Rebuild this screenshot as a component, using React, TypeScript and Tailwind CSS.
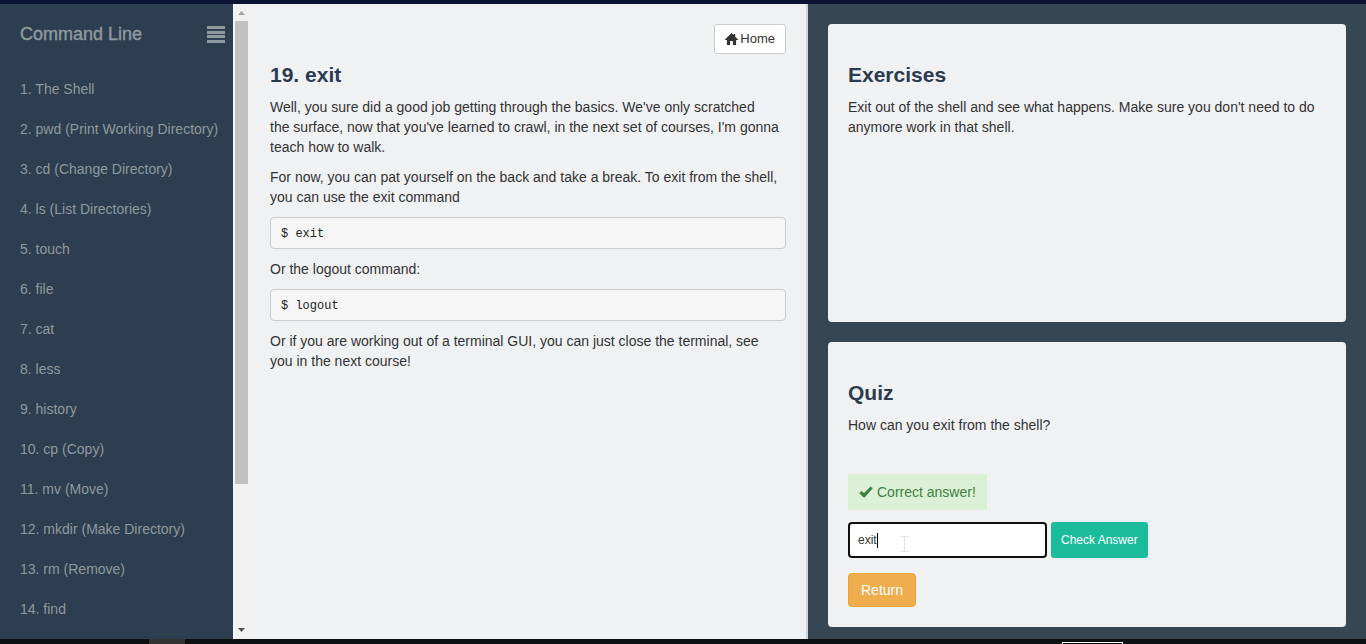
import { useState } from "react";

const lessons = [
  "The Shell",
  "pwd (Print Working Directory)",
  "cd (Change Directory)",
  "ls (List Directories)",
  "touch",
  "file",
  "cat",
  "less",
  "history",
  "cp (Copy)",
  "mv (Move)",
  "mkdir (Make Directory)",
  "rm (Remove)",
  "find",
];

function HomeIcon() {
  return (
    <svg viewBox="0 0 13 12" className="h-3 w-[13px]" fill="currentColor" aria-hidden="true">
      <path d="M6.5 0 8.6 2.1V1h1.6v2.7L13 6.5v.4h-1.9V12H7.9V8H5.1v4H1.9V6.9H0v-.4z" />
    </svg>
  );
}

function CheckIcon() {
  return (
    <svg viewBox="0 0 14 12" className="h-3 w-3.5" fill="currentColor" aria-hidden="true">
      <path d="M11.6.4 13.8 2.3 5.6 11.4H4.7L.3 7.3 2.4 5l2.6 2z" />
    </svg>
  );
}

function Sidebar() {
  return (
    <nav className="w-[233px] shrink-0 overflow-hidden bg-[#2d3e50] text-[#8f9a9f]">
      <div className="flex items-center justify-between pt-5 pr-2 pl-5">
        <h1 className="text-lg leading-5 font-normal [-webkit-text-stroke:0.4px]">Command Line</h1>
        <button type="button" aria-label="Toggle menu">
          <svg viewBox="0 0 18 18" className="h-[18px] w-[18px]" fill="currentColor" aria-hidden="true">
            <path d="M0 1h18v3H0zM0 6h18v3H0zM0 10h18v3H0zM0 15h18v3H0z" />
          </svg>
        </button>
      </div>
      <ol className="pt-[25px] pl-5">
        {lessons.map((name, i) => (
          <li key={name} className="h-10 whitespace-nowrap">
            <a href={`#lesson-${i + 1}`} className="block leading-10">
              {i + 1}. {name}
            </a>
          </li>
        ))}
      </ol>
    </nav>
  );
}

function ScrollTrack() {
  return (
    <div className="flex w-[15px] shrink-0 flex-col items-center border-l-2 border-[#f4f6fa] bg-[#f1f1f1]" aria-hidden="true">
      <svg viewBox="0 0 13 17" className="h-[17px] w-[13px] shrink-0">
        <path d="M3 11 6.5 7 10 11z" fill="#a3a3a3" />
      </svg>
      <div className="w-full grow-[463] bg-[#c1c1c1]" />
      <div className="w-full grow-[138]" />
      <svg viewBox="0 0 13 17" className="h-[17px] w-[13px] shrink-0">
        <path d="M3 6h7L6.5 10z" fill="#505050" />
      </svg>
    </div>
  );
}

function Heading({ children }: { children: string }) {
  return <h2 className="mb-[11px] text-[21px] leading-[22px] font-bold text-[#2c3a50]">{children}</h2>;
}

function Code({ children }: { children: string }) {
  return (
    <pre className="mb-2.5 rounded border border-[#cccccc] bg-[#f5f5f5] px-2.5 pt-1.5 pb-1 font-['Liberation_Mono',monospace] text-xs leading-5 text-[#222222]">
      {children}
    </pre>
  );
}

function Lesson() {
  return (
    <main className="min-w-0 overflow-hidden border-r-2 border-[#ccd4dc] bg-[#f0f1f3] pt-5 pr-5 pl-[22px]">
      <div className="mb-2.5 flex justify-end">
        <a href="#home" className="flex h-[30px] items-center gap-0.5 rounded-[3px] border border-[#cccccc] bg-white px-2.5 text-[13px] text-[#333333]">
          <HomeIcon />
          Home
        </a>
      </div>
      <Heading>19. exit</Heading>
      <p className="mb-2.5">
        Well, you sure did a good job getting through the basics. We've only scratched
        <br />
        the surface, now that you've learned to crawl, in the next set of courses, I'm gonna
        <br />
        teach how to walk.
      </p>
      <p className="mb-2.5">
        For now, you can pat yourself on the back and take a break. To exit from the shell,
        <br />
        you can use the exit command
      </p>
      <Code>$ exit</Code>
      <p className="mb-2.5">Or the logout command:</p>
      <Code>$ logout</Code>
      <p>
        Or if you are working out of a terminal GUI, you can just close the terminal, see
        <br />
        you in the next course!
      </p>
    </main>
  );
}

function Exercises() {
  return (
    <section className="grow rounded bg-[#f0f1f3] px-5 pt-10">
      <Heading>Exercises</Heading>
      <p>Exit out of the shell and see what happens. Make sure you don't need to do anymore work in that shell.</p>
    </section>
  );
}

function Quiz() {
  const [answer, setAnswer] = useState("exit");
  return (
    <section className="shrink-0 rounded bg-[#f0f1f3] px-5 pt-10 pb-5">
      <Heading>Quiz</Heading>
      <label htmlFor="answer" className="block">
        How can you exit from the shell?
      </label>
      <div className="mt-[39px] flex">
        <p className="flex h-9 items-center gap-1 bg-[#dcf0d6] px-[11px] text-[#3f8043]" role="status">
          <CheckIcon />
          Correct answer!
        </p>
      </div>
      <div className="mt-3 flex items-center gap-1">
        <div className="relative flex">
          <input
            id="answer"
            value={answer}
            onChange={(e) => setAnswer(e.target.value)}
            className="h-9 w-[199px] rounded border-2 border-[#101010] bg-white px-2 text-xs text-[#333333] outline-none"
          />
          <span className="absolute top-[11px] left-[29px] h-[15px] w-px bg-black" aria-hidden="true" />
          <svg viewBox="0 0 7 16" className="absolute top-3.5 left-[53px] h-4 w-[7px]" fill="none" stroke="#e2e2e2" aria-hidden="true">
            <path d="M0 .5h7M3.5 0v16M0 15.5h7" />
          </svg>
        </div>
        <button type="button" className="h-9 rounded-[3px] bg-[#1abc9c] px-2.5 text-xs text-white">
          Check Answer
        </button>
      </div>
      <button type="button" className="mt-[15px] block h-[34px] rounded border border-[#eea236] bg-[#f0ad4e] px-3 text-white">
        Return
      </button>
    </section>
  );
}

export default function App() {
  return (
    <div className="flex h-screen flex-col font-['Liberation_Sans',Arial,sans-serif] text-sm leading-5 text-[#333333]">
      <div className="h-1 shrink-0 bg-[#0b1533]" />
      <div className="flex min-h-0 grow">
        <Sidebar />
        <ScrollTrack />
        <div className="grid min-w-0 grow grid-cols-[560fr_558fr]">
          <Lesson />
          <aside className="flex min-w-0 flex-col gap-5 bg-[#364652] px-5 pt-5 pb-3">
            <Exercises />
            <Quiz />
          </aside>
        </div>
      </div>
      <div className="flex h-[5px] shrink-0 bg-[#0d0f10]">
        <div className="ml-[149px] w-9 bg-[#333333]" />
        <div className="mt-[3px] mr-[243px] ml-auto w-[61px] border border-b-0 border-white" />
      </div>
    </div>
  );
}
